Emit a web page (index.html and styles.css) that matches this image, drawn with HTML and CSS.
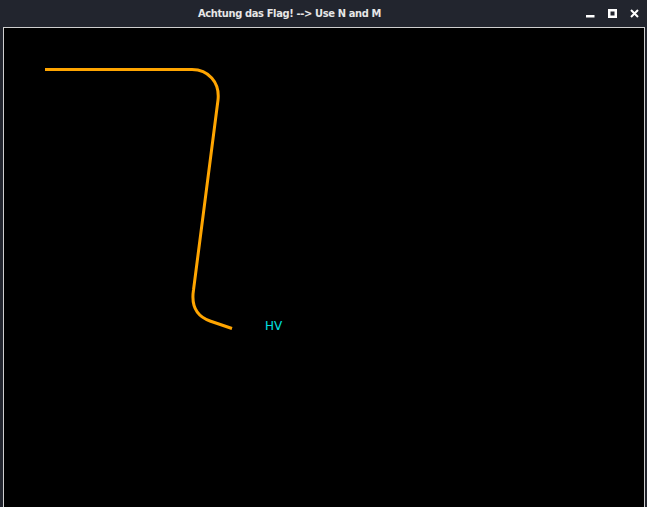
FILE: index.html
```html
<!DOCTYPE html>
<html>
<head>
<meta charset="utf-8">
<link rel="stylesheet" href="styles.css">
</head>
<body>
<div class="window">
  <div class="titlebar">
    <div class="title">Achtung das Flag! --&gt; Use N and M</div>
    <div class="controls">
      <svg class="ctl" width="9" height="9" viewBox="0 0 9 9"><rect x="0" y="6" width="8.5" height="2.5" fill="#ffffff"/></svg>
      <svg class="ctl" width="9" height="9" viewBox="0 0 9 9"><rect x="1.25" y="1.25" width="6.5" height="6.5" fill="none" stroke="#ffffff" stroke-width="2.5"/></svg>
      <svg class="ctl" width="9" height="9" viewBox="0 0 9 9"><path d="M1 1 L8 8 M8 1 L1 8" stroke="#ffffff" stroke-width="2" fill="none"/></svg>
    </div>
  </div>
  <div class="frame">
    <svg class="canvas" width="640" height="480" viewBox="0 0 640 480">
      <path d="M41 41.5 H188 C204 41.5 216 54 214 72 L189.5 262 C187 278 192 288 206 293 L228 300.5" fill="none" stroke="#ffa500" stroke-width="3"/>
      <text x="261" y="302" class="label">HV</text>
    </svg>
  </div>
</div>
</body>
</html>
```
FILE: styles.css
```css
html, body {
  margin: 0;
  padding: 0;
  background: #22252e;
  overflow: hidden;
}
.window {
  width: 647px;
  height: 507px;
  display: flex;
  flex-direction: column;
}
.titlebar {
  height: 27px;
  display: flex;
  align-items: center;
  flex: none;
}
.title {
  flex: 1;
  text-align: center;
  padding-left: 4px;
  color: #e6e6e6;
  font-family: "DejaVu Sans", sans-serif;
  font-stretch: condensed;
  font-weight: bold;
  font-size: 11px;
  letter-spacing: -0.35px;
  margin-top: -1px;
}
.controls {
  display: flex;
  gap: 13px;
  padding-right: 8px;
  width: 64px;
  justify-content: flex-end;
}
.ctl {
  display: block;
}
.frame {
  flex: 1;
  margin: 0 2px 0 3px;
  border: 1px solid #cfcfcf;
  border-bottom: none;
  background: #000;
  overflow: hidden;
}
.canvas {
  display: block;
}
.label {
  fill: #00e0e0;
  font-family: "DejaVu Sans", sans-serif;
  font-size: 12px;
}
```
